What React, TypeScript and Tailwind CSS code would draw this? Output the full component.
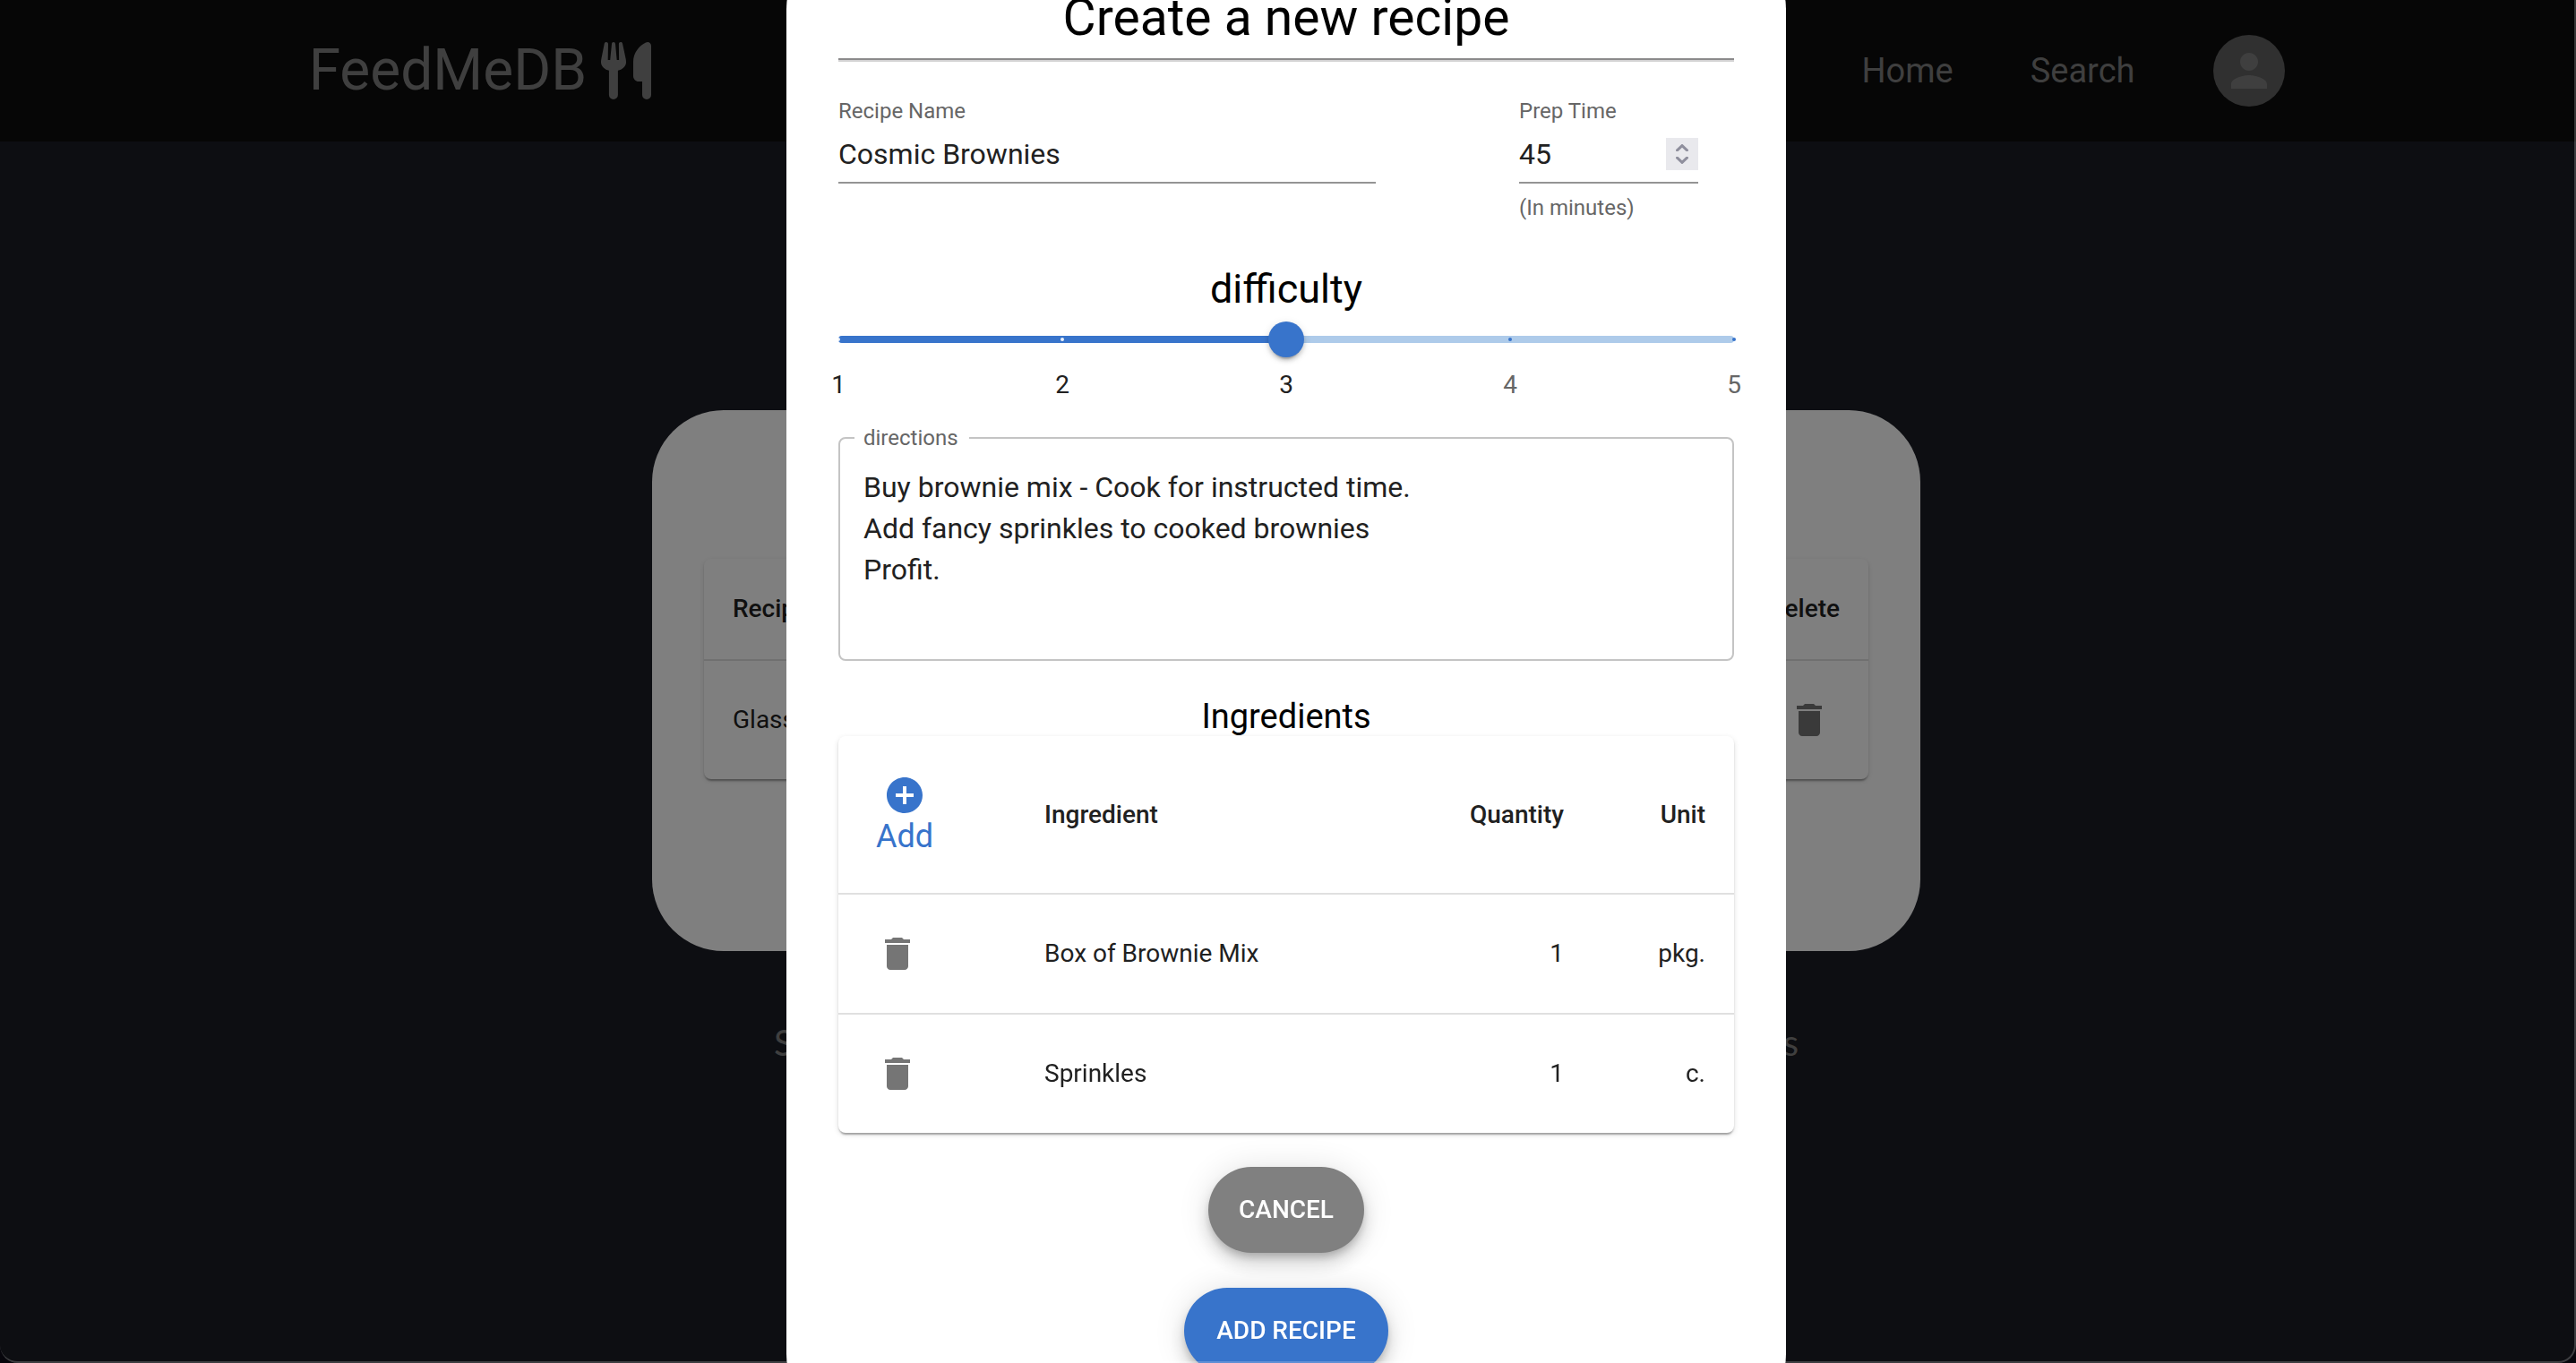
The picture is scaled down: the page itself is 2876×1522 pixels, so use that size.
import { useState } from "react";
import { MdAddCircle, MdDelete, MdPerson } from "react-icons/md";

const PAPER_SHADOW =
  "shadow-[0_4px_2px_-2px_rgba(0,0,0,0.2),0_2px_2px_0_rgba(0,0,0,0.14),0_2px_6px_0_rgba(0,0,0,0.12)]";
const FAB_SHADOW =
  "shadow-[0_6px_10px_-2px_rgba(0,0,0,0.2),0_12px_20px_0_rgba(0,0,0,0.14),0_2px_36px_0_rgba(0,0,0,0.12)]";

const ingredients = [
  { name: "Box of Brownie Mix", quantity: 1, unit: "pkg." },
  { name: "Sprinkles", quantity: 1, unit: "c." },
];

const levels = [1, 2, 3, 4, 5];

function DeleteButton({ label }: { label: string }) {
  return (
    <button type="button" aria-label={label} className="p-2.5 align-middle text-[#757575]">
      <MdDelete className="size-12" />
    </button>
  );
}

function Utensils() {
  return (
    <svg viewBox="0 0 56 64" className="h-16 w-14" fill="currentColor" aria-hidden="true">
      <path d="M5.800 0C7 0 8 .9 8 2L7.700 20H10.200L12 2C12 .8 12.800 0 14 0S15.900 .8 16 2L17.700 20H20.100L19.900 2C19.900 .9 20.800 0 22 0C23 0 23.900 .6 24 1.600L27.700 19C28 20.500 28 22 28 23C27.500 27.500 23.500 31 18.900 31.800V59a5 5 0 0 1-10 0V31.800C4.500 31 .5 27.500 0 23C0 22 0 20.500 .3 19L3.800 1.600C4 .6 4.800 0 5.800 0Z" />
      <path d="M52 0C54.200 0 56 1.800 56 4V59a5 5 0 0 1-10 0V44H42C38.700 44 36 41.300 36 38V22C36 12 43 3.500 50 .5C50.700 .2 51.400 0 52 0Z" />
    </svg>
  );
}

function Page() {
  return (
    <div className="min-h-screen bg-[#1a1c24] pr-1">
      <header className="-mr-1 flex h-[158px] items-center justify-between bg-[#0c0c0c] pl-[12%] pr-[11.3%] text-[#7e7e7e]">
        <a href="#home" className="flex items-center gap-4 text-[64px] leading-none">
          FeedMeDB
          <Utensils />
        </a>
        <nav className="flex items-center text-[38px] leading-none">
          <a href="#home" className="mr-[86px]">Home</a>
          <a href="#search" className="mr-[88px]">Search</a>
          <button
            type="button"
            aria-label="Account"
            className="flex size-20 items-center justify-center rounded-full bg-[#606060]"
          >
            <MdPerson className="size-[60px]" />
          </button>
        </nav>
      </header>
      <main className="flex flex-col items-center pt-[300px]">
        <section className="w-[1416px] max-w-full rounded-[80px] bg-white px-[58px] pt-[166px] pb-48">
          <div className={`rounded-lg bg-white ${PAPER_SHADOW}`}>
            <table className="w-full text-[28px] text-[#212121]">
              <thead>
                <tr className="h-[113px] border-b-2 border-[#e0e0e0]">
                  <th scope="col" className="px-8 text-left font-medium">Recipe</th>
                  <th scope="col" className="px-8 text-right font-medium">Delete</th>
                </tr>
              </thead>
              <tbody>
                <tr className="h-[133px]">
                  <td className="px-8">Glass</td>
                  <td className="px-8 text-right">
                    <DeleteButton label="Delete recipe" />
                  </td>
                </tr>
              </tbody>
            </table>
          </div>
        </section>
        <footer className="mt-20 flex w-[1144px] max-w-full justify-between font-['Lato',sans-serif] text-[40px] leading-[44px] text-[#7e7e7e]">
          <span>S</span>
          <span>s</span>
        </footer>
      </main>
    </div>
  );
}

function Stepper({ onStep }: { onStep: (delta: number) => void }) {
  return (
    <div className="flex size-9 flex-col bg-[#e9e9ed] text-[#8f8f9d]">
      <button type="button" aria-label="Increase" onClick={() => onStep(1)} className="flex flex-1 items-center justify-center">
        <svg viewBox="0 0 14 8" className="mt-1 h-2 w-3.5" fill="none" stroke="currentColor" strokeWidth="3" strokeLinecap="round">
          <path d="M1.500 6.800 7 1.600l5.500 5.200" />
        </svg>
      </button>
      <button type="button" aria-label="Decrease" onClick={() => onStep(-1)} className="flex flex-1 items-center justify-center">
        <svg viewBox="0 0 14 8" className="mb-1 h-2 w-3.5" fill="none" stroke="currentColor" strokeWidth="3" strokeLinecap="round">
          <path d="M1.500 1.200 7 6.400l5.500-5.200" />
        </svg>
      </button>
    </div>
  );
}

function DifficultySlider() {
  const [value, setValue] = useState(3);
  const percent = (value - 1) * 25;
  return (
    <div>
      <div className="relative mt-2.5 flex h-10 items-center">
        <div className="h-2 w-full overflow-hidden rounded-sm bg-[#aecbea]">
          <div className="h-full bg-[#3874cb]" style={{ width: `${percent}%` }} />
        </div>
        <div className="absolute inset-x-0 flex justify-between">
          {levels.map((n) => (
            <span key={n} className="flex w-0 justify-center">
              <span className={n <= value ? "size-1 shrink-0 rounded-full bg-white/90" : "size-1 shrink-0 rounded-full bg-[#3874cb]"} />
            </span>
          ))}
        </div>
        <div
          className="absolute size-10 -translate-x-1/2 rounded-full bg-[#3874cb] shadow-[0_6px_2px_-4px_rgba(0,0,0,0.2),0_4px_4px_0_rgba(0,0,0,0.14),0_2px_10px_0_rgba(0,0,0,0.12)]"
          style={{ left: `${percent}%` }}
        />
        <input
          type="range"
          min={1}
          max={5}
          value={value}
          aria-labelledby="difficulty-label"
          onChange={(e) => setValue(Number(e.target.value))}
          className="absolute inset-0 w-full cursor-pointer opacity-0"
        />
      </div>
      <div className="mt-[17px] flex justify-between text-[28px] leading-7">
        {levels.map((n) => (
          <span key={n} className={n <= value ? "flex w-0 justify-center text-[#212121]" : "flex w-0 justify-center text-[#666666]"}>
            {n}
          </span>
        ))}
      </div>
    </div>
  );
}

function RecipeDialog() {
  const [minutes, setMinutes] = useState(45);
  return (
    <div className="fixed inset-0 flex items-center justify-center bg-black/50 pr-1">
      <form
        role="dialog"
        aria-labelledby="dialog-title"
        className="flex w-[1116px] max-w-full shrink-0 flex-col rounded-[80px] bg-white p-[58px] text-[#212121]"
      >
        <h1 id="dialog-title" className="text-center text-[57px] leading-[64px] text-black">
          Create a new recipe
        </h1>
        <hr className="mt-[13px] h-1 border-t-2 border-b-2 border-t-[#8b8a8b] border-b-[#d4d3d4]" />

        <div className="mt-[43px] flex items-start gap-40">
          <div className="flex w-3/5 flex-col">
            <label htmlFor="recipe-name" className="text-2xl leading-6 text-[#666666]">Recipe Name</label>
            <input
              id="recipe-name"
              type="text"
              defaultValue="Cosmic Brownies"
              className="mt-[13px] h-14 border-b-2 border-[#949494] pb-2 text-[32px] outline-none"
            />
          </div>
          <div className="flex w-1/5 flex-col">
            <label htmlFor="prep-time" className="text-2xl leading-6 text-[#666666]">Prep Time</label>
            <div className="mt-[13px] flex h-14 items-center border-b-2 border-[#949494] pb-2">
              <input
                id="prep-time"
                type="number"
                value={minutes}
                aria-describedby="prep-help"
                onChange={(e) => setMinutes(Number(e.target.value))}
                className="w-0 min-w-0 flex-1 text-[32px] outline-none [appearance:textfield] [&::-webkit-inner-spin-button]:appearance-none"
              />
              <Stepper onStep={(d) => setMinutes(minutes + d)} />
            </div>
            <p id="prep-help" className="mt-[15px] text-2xl leading-6 text-[#666666]">(In minutes)</p>
          </div>
        </div>

        <h2 id="difficulty-label" className="mt-[53px] text-center text-[45px] leading-[52px] text-black">difficulty</h2>
        <DifficultySlider />

        <fieldset className="mt-[33px] rounded-lg border-2 border-[#c4c4c4] px-[26px] pb-[31px]">
          <legend className="-ml-2.5 pl-2.5 pr-3 text-2xl leading-6 text-[#666666]">
            <label htmlFor="directions">directions</label>
          </legend>
          <textarea
            id="directions"
            rows={4}
            defaultValue={"Buy brownie mix - Cook for instructed time.\nAdd fancy sprinkles to cooked brownies\nProfit."}
            className="mt-5 block w-full resize-none text-[32px] leading-[46px] outline-none"
          />
        </fieldset>

        <h3 className="mt-10 text-center text-[38px] leading-[44px] text-black">Ingredients</h3>
        <div className={`rounded-lg bg-white ${PAPER_SHADOW}`}>
          <table className="w-full text-[28px]">
            <thead>
              <tr className="h-[176px] border-b-2 border-[#e0e0e0]">
                <th scope="col" className="w-[198px] px-8 text-left font-normal">
                  <button type="button" className="flex flex-col items-center px-2.5 text-4xl leading-[44px] text-[#3874cb]">
                    <MdAddCircle className="size-12" />
                    Add
                  </button>
                </th>
                <th scope="col" className="px-8 text-left font-medium">Ingredient</th>
                <th scope="col" className="px-8 text-right font-medium">Quantity</th>
                <th scope="col" className="w-[158px] px-8 text-right font-medium">Unit</th>
              </tr>
            </thead>
            <tbody>
              {ingredients.map((item) => (
                <tr key={item.name} className="h-[134px] border-b-2 border-[#e0e0e0] last:h-[133px] last:border-b-0">
                  <td className="px-8">
                    <DeleteButton label={`Remove ${item.name}`} />
                  </td>
                  <td className="px-8">{item.name}</td>
                  <td className="px-8 text-right">{item.quantity}</td>
                  <td className="px-8 text-right">{item.unit}</td>
                </tr>
              ))}
            </tbody>
          </table>
        </div>

        <div className="mt-[38px] flex flex-col items-center gap-[39px] text-[28px] font-medium text-white">
          <button type="button" className={`h-24 rounded-full bg-[#808080] px-[34px] ${FAB_SHADOW}`}>CANCEL</button>
          <button type="button" className={`h-24 rounded-full bg-[#3874cb] px-9 ${FAB_SHADOW}`}>ADD RECIPE</button>
        </div>
      </form>
    </div>
  );
}

export default function App() {
  return (
    <div className="relative h-screen overflow-hidden font-['Roboto',sans-serif]">
      <Page />
      <RecipeDialog />
      <div className="pointer-events-none fixed inset-0 rounded-b-[20px] border-r-2 border-b-2 border-white/20 shadow-[0_0_0_20px_#07060c]" />
    </div>
  );
}
